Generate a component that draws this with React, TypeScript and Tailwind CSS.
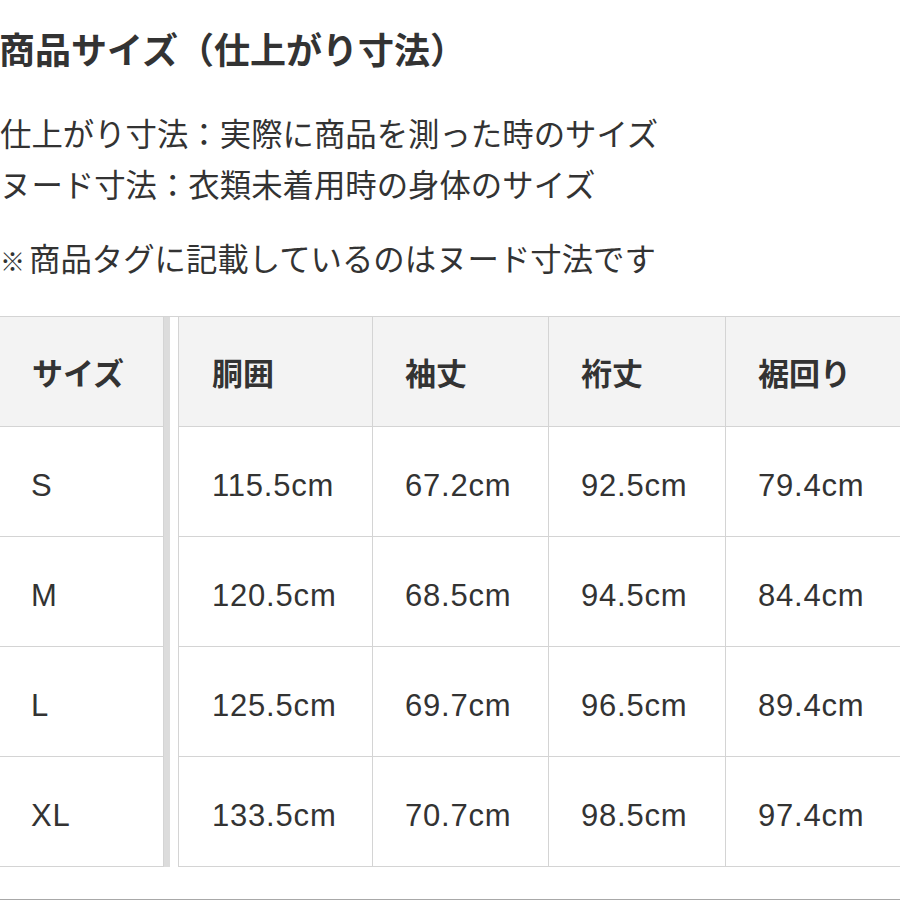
const headers = ["胴囲", "袖丈", "裄丈", "裾回り"];

const rows = [
  { size: "S", values: ["115.5cm", "67.2cm", "92.5cm", "79.4cm"] },
  { size: "M", values: ["120.5cm", "68.5cm", "94.5cm", "84.4cm"] },
  { size: "L", values: ["125.5cm", "69.7cm", "96.5cm", "89.4cm"] },
  { size: "XL", values: ["133.5cm", "70.7cm", "98.5cm", "97.4cm"] },
];

const headCell =
  "h-[110px] flex items-center pt-[7px] border-b border-r border-[#d4d4d4] bg-[#f3f3f3] text-[31px] font-bold";
const bodyCell =
  "h-[110px] flex items-center pt-[10px] border-b border-r border-[#d4d4d4] bg-white text-[31px] tracking-[0.8px]";

export default function App() {
  return (
    <div className="w-[900px] h-[900px] overflow-hidden bg-white text-[#333] font-['Liberation_Sans','Noto_Sans_CJK_JP',sans-serif]">
      <h1 className="pt-[27px] -ml-px text-[36px] leading-[50px] font-bold">
        商品サイズ（仕上がり寸法）
      </h1>
      <div className="mt-[33px] text-[31.4px] leading-[51px]">
        <p>仕上がり寸法：実際に商品を測った時のサイズ</p>
        <p>ヌード寸法：衣類未着用時の身体のサイズ</p>
        <p className="mt-[23px] flex items-center">
          <span className="text-[25px] mr-[4px] font-['Noto_Sans_CJK_JP',sans-serif]">※</span>
          <span>商品タグに記載しているのはヌード寸法です</span>
        </p>
      </div>

      <div className="mt-[30px] flex border-t border-[#d4d4d4] w-[960px]">
        <div className="w-[164px] shrink-0">
          <div className={`${headCell} pl-[32px]`}>サイズ</div>
          {rows.map((r) => (
            <div key={r.size} className={`${bodyCell} pl-[31px]`}>
              {r.size}
            </div>
          ))}
        </div>
        <div className="w-[6px] shrink-0 bg-[#dcdcdc]" />
        <div className="w-[8px] shrink-0" />
        <div className="grid grid-cols-[194px_176px_177px_200px] border-l border-[#d4d4d4]">
          {headers.map((h, i) => (
            <div
              key={h}
              className={`${headCell} ${i === 0 ? "pl-[33px]" : "pl-[32px]"}`}
            >
              {h}
            </div>
          ))}
          {rows.map((r) =>
            r.values.map((v, i) => (
              <div
                key={r.size + i}
                className={`${bodyCell} ${i === 0 ? "pl-[33px]" : "pl-[32px]"}`}
              >
                {v}
              </div>
            ))
          )}
        </div>
      </div>
      <div className="mt-[32px] h-px bg-[#a8a8a8]" />
    </div>
  );
}
